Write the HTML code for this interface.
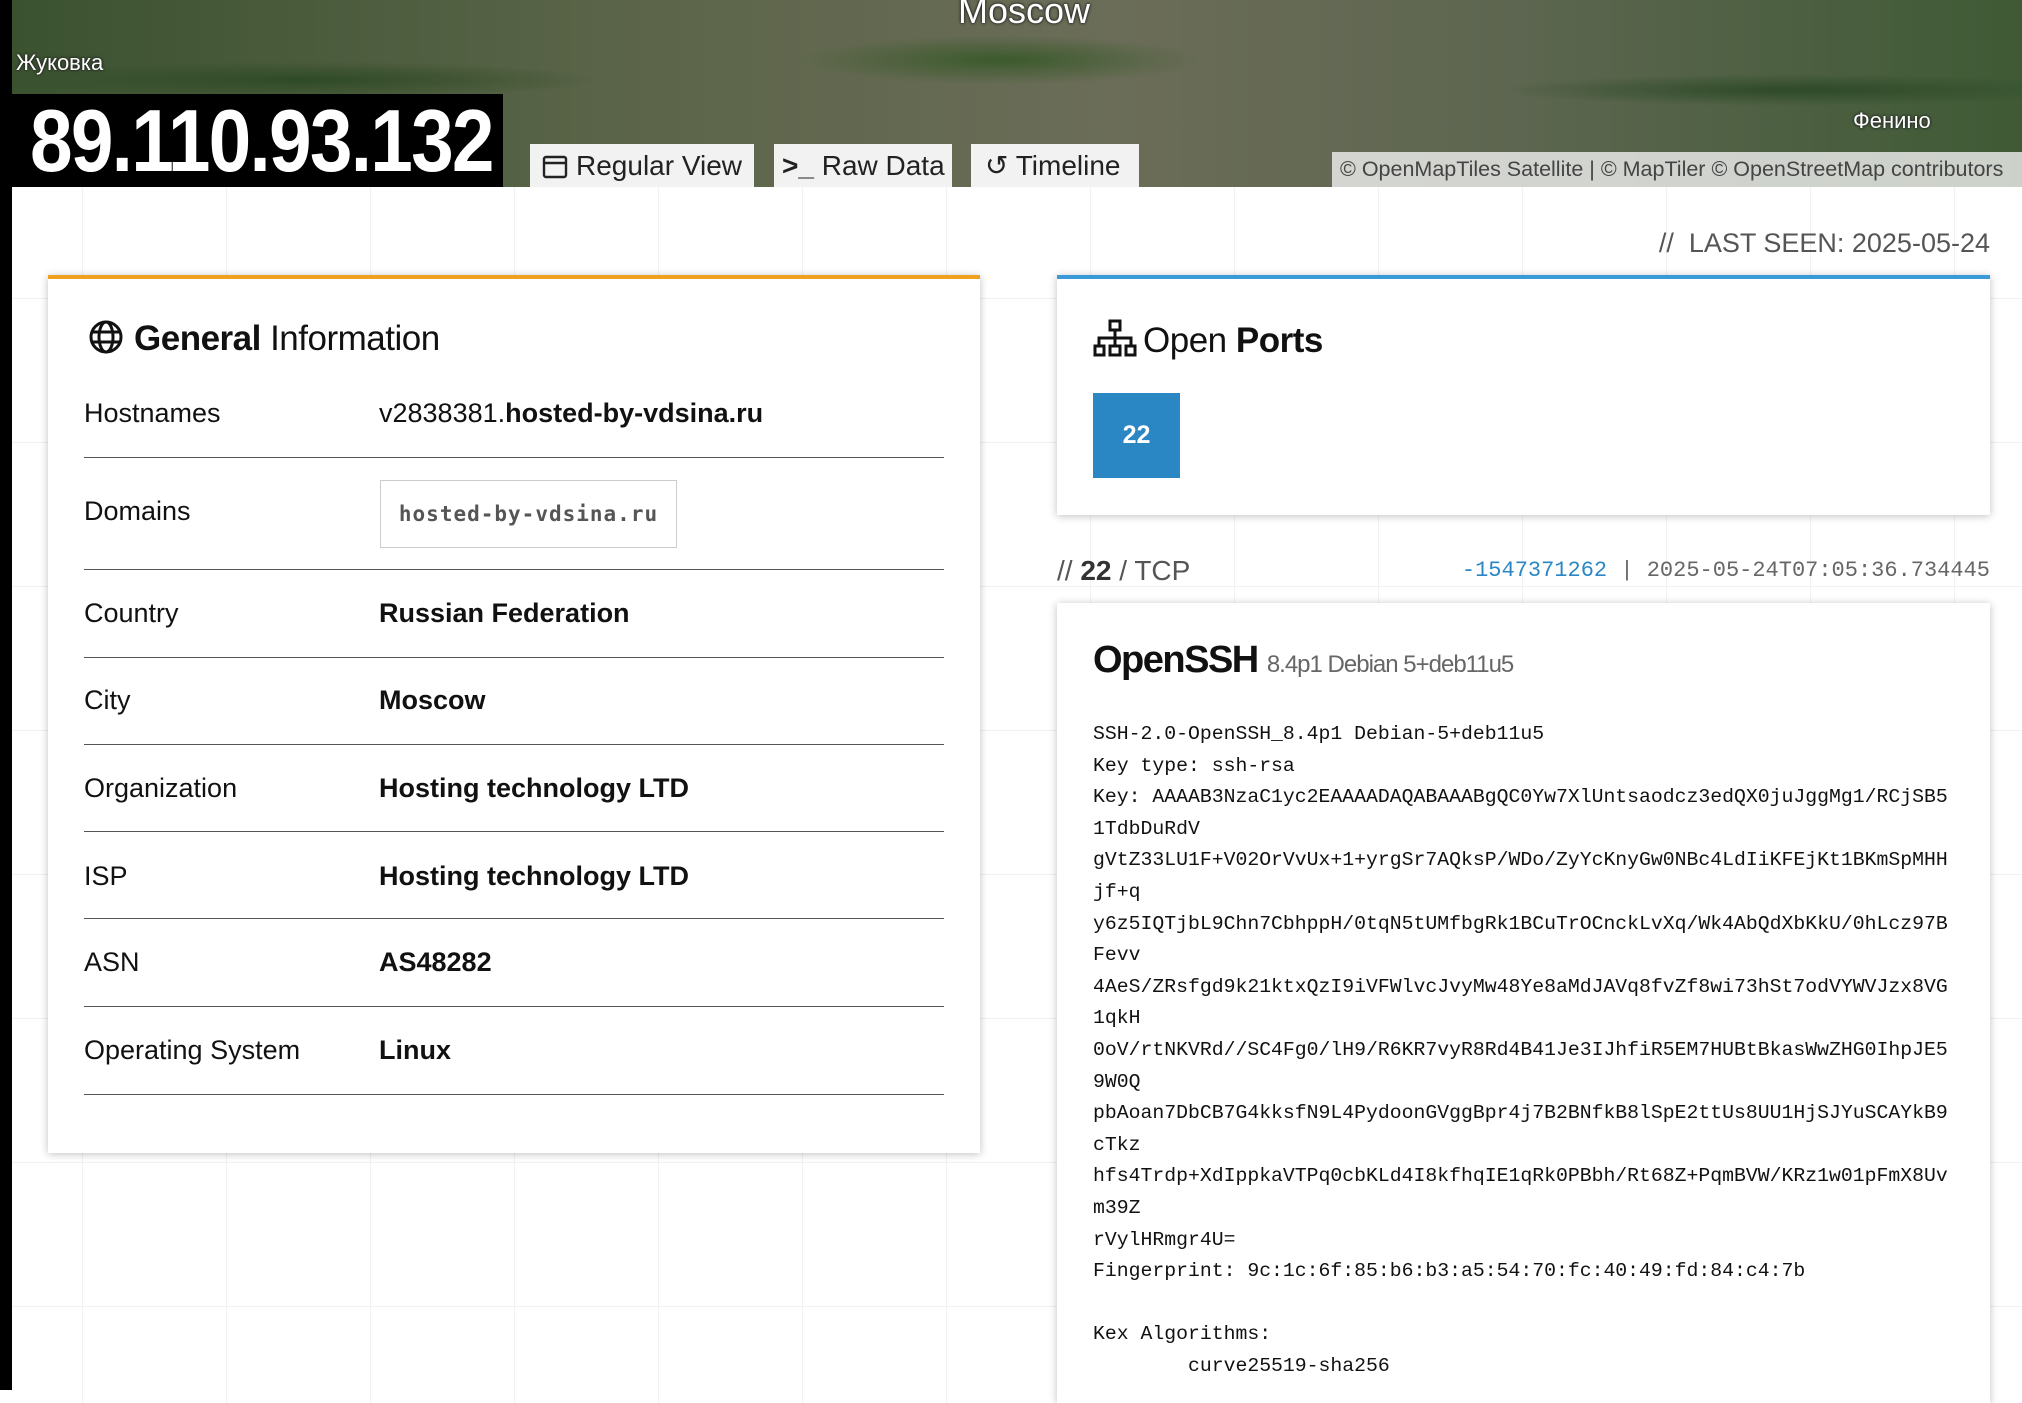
<!DOCTYPE html>
<html><head><meta charset="utf-8"><style>
*{margin:0;padding:0;box-sizing:border-box}
body{width:2022px;height:1390px;overflow:hidden;background:#fff;font-family:"Liberation Sans",sans-serif;position:relative;color:#111;
background-image:linear-gradient(#f1f1f1 1px,transparent 1px),linear-gradient(90deg,#f1f1f1 1px,transparent 1px);background-size:144px 144px;background-position:82px 10px}
.abs{position:absolute}
#map{left:0;top:0;width:2022px;height:187px;background:
radial-gradient(ellipse at 300px 80px,#2f4a26 0,transparent 300px),
radial-gradient(ellipse at 1000px 60px,#3b5a2c 0,transparent 200px),
radial-gradient(ellipse at 1800px 90px,#2e4a28 0,transparent 300px),
linear-gradient(90deg,#3a5230,#5a6448 30%,#6b6d58 55%,#5d6650 75%,#3f5a35);overflow:hidden}
#strip{left:0;top:0;width:12px;height:1390px;background:#000}
.lbl{color:#fff;text-shadow:0 0 3px #222,0 0 2px #222}
#ip{left:12px;top:94px;width:491px;height:93px;background:#000;color:#fff;font-weight:bold;font-size:88px;line-height:93px;padding-left:18px;letter-spacing:-2px;overflow:hidden}
#ip span{display:inline-block;transform:scaleX(0.87);transform-origin:left center}
.tab{top:144px;height:43px;background:#f2f2f2;font-size:28px;line-height:43px;color:#222;padding-left:12px}
#attr{left:1332px;top:152px;width:690px;height:35px;background:rgba(240,240,240,.8);font-size:21.5px;line-height:35px;color:#444;padding-left:8px;white-space:nowrap}
.card{background:#fff;box-shadow:0 1px 8px rgba(0,0,0,.25)}
.row{position:absolute;left:84px;width:860px;border-bottom:1.5px solid #555;font-size:27px}
.row span{position:absolute;left:0}
.row b{position:absolute;left:295px}
pre{font-family:"Liberation Mono",monospace;font-size:19.8px;line-height:31.6px;color:#111}
</style></head><body>
<div id="map" class="abs">
<div class="abs lbl" style="left:958px;top:-10px;font-size:36px">Moscow</div>
<div class="abs lbl" style="left:16px;top:50px;font-size:22px">Жуковка</div>
<div class="abs lbl" style="left:1853px;top:108px;font-size:22px">Фенино</div>
</div>
<div id="strip" class="abs"></div>
<div id="ip" class="abs"><span>89.110.93.132</span></div>
<div class="abs tab" style="left:530px;width:224px"><svg width="26" height="24" viewBox="0 0 26 24" style="vertical-align:-4px;margin-right:8px"><rect x="2" y="2" width="22" height="20" rx="2" fill="none" stroke="#222" stroke-width="2.4"/><line x1="2" y1="8" x2="24" y2="8" stroke="#222" stroke-width="2.4"/></svg>Regular View</div>
<div class="abs tab" style="left:774px;width:178px;padding-left:8px"><span style="font-weight:bold">&gt;_</span> Raw Data</div>
<div class="abs tab" style="left:971px;width:168px;padding-left:14px">&#x21BA; Timeline</div>
<div id="attr" class="abs">© OpenMapTiles Satellite | © MapTiler © OpenStreetMap contributors</div>

<div class="abs" style="right:32px;top:228px;font-size:27px;color:#555">//&nbsp; LAST SEEN: 2025-05-24</div>

<div class="abs card" style="left:48px;top:275px;width:932px;height:878px;border-top:4px solid #f0a020">
<div class="abs" style="left:40px;top:40px;font-size:35px;letter-spacing:-0.5px"><svg width="36" height="36" viewBox="0 0 36 36" style="vertical-align:-5px;margin-right:10px"><g fill="none" stroke="#111" stroke-width="3"><circle cx="18" cy="18" r="15"/><ellipse cx="18" cy="18" rx="7" ry="15"/><line x1="3" y1="13" x2="33" y2="13"/><line x1="3" y1="23" x2="33" y2="23"/></g></svg><b>General</b> Information</div>
</div>
<div class="row" style="top:398px;height:60px"><span>Hostnames</span><b style="font-weight:normal">v2838381.<b style="position:static">hosted-by-vdsina.ru</b></b></div>
<div class="row" style="top:458px;height:112px"><span style="top:38px">Domains</span><div class="abs" style="left:296px;top:22px;width:297px;height:68px;border:1.5px solid #ccc;font-family:'DejaVu Sans Mono',monospace;font-weight:bold;font-size:21px;color:#555;line-height:66px;text-align:center;letter-spacing:1px">hosted-by-vdsina.ru</div></div>
<div class="row" style="top:598px;height:60px"><span>Country</span><b>Russian Federation</b></div>
<div class="row" style="top:685px;height:60px"><span>City</span><b>Moscow</b></div>
<div class="row" style="top:773px;height:59px"><span>Organization</span><b>Hosting technology LTD</b></div>
<div class="row" style="top:861px;height:58px"><span>ISP</span><b>Hosting technology LTD</b></div>
<div class="row" style="top:947px;height:60px"><span>ASN</span><b>AS48282</b></div>
<div class="row" style="top:1035px;height:60px"><span>Operating System</span><b>Linux</b></div>

<div class="abs card" style="left:1057px;top:275px;width:933px;height:240px;border-top:4px solid #3a9ad9">
<div class="abs" style="left:36px;top:40px;font-size:35px;letter-spacing:-0.5px"><svg width="44" height="38" viewBox="0 0 44 38" style="vertical-align:-5px;margin-right:6px"><g fill="none" stroke="#111" stroke-width="3"><rect x="17" y="2" width="10" height="9"/><rect x="2" y="27" width="9" height="9"/><rect x="17" y="27" width="10" height="9"/><rect x="33" y="27" width="9" height="9"/><path d="M22 11V27M6 27V19H38V27"/></g></svg>Open <b>Ports</b></div>
<div class="abs" style="left:36px;top:114px;width:87px;height:85px;background:#2a87c4;color:#fff;font-weight:bold;font-size:25px;line-height:85px;text-align:center">22</div>
</div>

<div class="abs" style="left:1057px;top:555px;font-size:28px;color:#555">// <b style="color:#333">22</b> / TCP</div>
<div class="abs" style="right:32px;top:558px;font-family:'Liberation Mono',monospace;font-size:22px;color:#666"><span style="color:#2a87c4">-1547371262</span> | 2025-05-24T07:05:36.734445</div>

<div class="abs card" style="left:1057px;top:603px;width:933px;height:800px">
<div class="abs" style="left:36px;top:36px;font-size:38px;font-weight:bold;letter-spacing:-1.5px">OpenSSH <span style="font-weight:normal;font-size:24px;color:#666;letter-spacing:-1px">8.4p1 Debian 5+deb11u5</span></div>
<pre class="abs" style="left:36px;top:116px">SSH-2.0-OpenSSH_8.4p1 Debian-5+deb11u5
Key type: ssh-rsa
Key: AAAAB3NzaC1yc2EAAAADAQABAAABgQC0Yw7XlUntsaodcz3edQX0juJggMg1/RCjSB5
1TdbDuRdV
gVtZ33LU1F+V02OrVvUx+1+yrgSr7AQksP/WDo/ZyYcKnyGw0NBc4LdIiKFEjKt1BKmSpMHH
jf+q
y6z5IQTjbL9Chn7CbhppH/0tqN5tUMfbgRk1BCuTrOCnckLvXq/Wk4AbQdXbKkU/0hLcz97B
Fevv
4AeS/ZRsfgd9k21ktxQzI9iVFWlvcJvyMw48Ye8aMdJAVq8fvZf8wi73hSt7odVYWVJzx8VG
1qkH
0oV/rtNKVRd//SC4Fg0/lH9/R6KR7vyR8Rd4B41Je3IJhfiR5EM7HUBtBkasWwZHG0IhpJE5
9W0Q
pbAoan7DbCB7G4kksfN9L4PydoonGVggBpr4j7B2BNfkB8lSpE2ttUs8UU1HjSJYuSCAYkB9
cTkz
hfs4Trdp+XdIppkaVTPq0cbKLd4I8kfhqIE1qRk0PBbh/Rt68Z+PqmBVW/KRz1w01pFmX8Uv
m39Z
rVylHRmgr4U=
Fingerprint: 9c:1c:6f:85:b6:b3:a5:54:70:fc:40:49:fd:84:c4:7b

Kex Algorithms:
        curve25519-sha256</pre>
</div>
</body></html>
